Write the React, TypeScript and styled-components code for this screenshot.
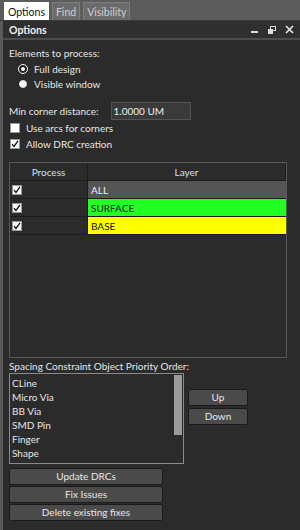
import React from "react";
import styled, { createGlobalStyle } from "styled-components";

const GlobalStyle = createGlobalStyle`
  html, body {
    margin: 0;
    padding: 0;
    background: #2b2b2b;
  }
  body {
    font-family: Lato, "Noto Sans", sans-serif;
    font-size: 10px;
    color: #e6e6e6;
  }
`;

const Frame = styled.div`
  width: 300px;
  height: 530px;
  display: flex;
  flex-direction: column;
  background: #5a5a5a;
  overflow: hidden;
`;

const TabBar = styled.div`
  height: 20px;
  display: flex;
  align-items: flex-end;
  gap: 3px;
  padding-left: 4px;
  background: #5c5c5c;
  border-bottom: 1px solid #3a3a3a;
`;

const Tab = styled.div<{ $active?: boolean }>`
  height: 18px;
  padding: 0 3px;
  display: flex;
  align-items: center;
  font-size: 10.5px;
  border: 1px solid ${(p) => (p.$active ? "#ffffff" : "#7e7e7e")};
  border-bottom: none;
  background: ${(p) => (p.$active ? "#ffffff" : "#6b6b6b")};
  color: ${(p) => (p.$active ? "#111" : "#cfcfcf")};
  box-sizing: border-box;
`;

const Panel = styled.div`
  flex: 1;
  display: flex;
  flex-direction: column;
  margin-left: 3px;
  background: #2b2b2b;
`;

const TitleBar = styled.div`
  height: 17px;
  display: flex;
  align-items: center;
  padding: 0 6px 0 6px;
  background: #2f2f2f;
  border-bottom: 2px solid #4d4d4d;
`;

const Title = styled.div`
  flex: 1;
  font-weight: 700;
  font-size: 10.5px;
  color: #f0f0f0;
`;

const TitleIcons = styled.div`
  display: flex;
  align-items: center;
  gap: 9px;
  color: #e8e8e8;
`;

const Body = styled.div`
  flex: 1;
  display: flex;
  flex-direction: column;
  padding: 5px 13px 0 6px;
`;

const Label = styled.div`
  height: 16px;
  line-height: 16px;
`;

const RadioRow = styled.label`
  height: 15px;
  display: flex;
  align-items: center;
  gap: 7px;
  padding-left: 10px;
`;

const RadioDot = styled.span<{ $checked?: boolean }>`
  width: 8px;
  height: 8px;
  border-radius: 50%;
  background: #ffffff;
  box-sizing: border-box;
  border: ${(p) => (p.$checked ? "2px solid #1a1a1a" : "1px solid #ddd")};
  outline: ${(p) => (p.$checked ? "1px solid #fff" : "none")};
`;

const FieldRow = styled.div`
  display: flex;
  align-items: center;
  gap: 12px;
  margin-top: 11px;
  height: 18px;
`;

const Input = styled.div`
  width: 80px;
  height: 18px;
  box-sizing: border-box;
  padding: 0 2px;
  line-height: 16px;
  background: #3a3a3a;
  border: 1px solid #555;
  color: #eee;
`;

const CheckRow = styled.label`
  height: 16px;
  display: flex;
  align-items: center;
  gap: 6px;
  padding-left: 1px;
`;

const Box = styled.span`
  width: 10px;
  height: 10px;
  background: #fff;
  border: 1px solid #999;
  box-sizing: border-box;
  display: flex;
  align-items: center;
  justify-content: center;
`;

const Table = styled.div`
  margin-top: 10px;
  height: 194px;
  border: 1px solid #5a5a5a;
  display: grid;
  grid-template-columns: 78px 1fr;
  grid-auto-rows: 18px;
  align-content: start;
  background: #2b2b2b;
`;

const HeadCell = styled.div`
  display: flex;
  align-items: center;
  justify-content: center;
  color: #d6e0ea;
  border-right: 1px solid #1c1c1c;
  border-bottom: 1px solid #1c1c1c;
  &:last-child {
    border-right: none;
  }
`;

const CheckCell = styled.div`
  display: flex;
  align-items: center;
  padding-left: 2px;
  border-right: 1px solid #1c1c1c;
  border-bottom: 1px solid #1c1c1c;
`;

const LayerCell = styled.div<{ $bg: string; $fg: string }>`
  display: flex;
  align-items: center;
  padding-left: 3px;
  background: ${(p) => p.$bg};
  color: ${(p) => p.$fg};
  border-bottom: 1px solid #1c1c1c;
`;

const SectionLabel = styled.div`
  height: 14px;
  line-height: 14px;
  margin-top: 1px;
`;

const ListArea = styled.div`
  display: flex;
  gap: 4px;
`;

const ListBox = styled.div`
  width: 175px;
  height: 91px;
  box-sizing: border-box;
  border: 1px solid #8a8a8a;
  display: flex;
  overflow: hidden;
  background: #2b2b2b;
`;

const ListItems = styled.div`
  flex: 1;
  padding: 2px 0 0 2px;
`;

const ListItem = styled.div`
  height: 14px;
  line-height: 14px;
`;

const ScrollTrack = styled.div`
  width: 8px;
  padding: 1px 1px 0 0;
`;

const ScrollThumb = styled.div`
  height: 60px;
  background: #9a9a9a;
`;

const SideButtons = styled.div`
  display: flex;
  flex-direction: column;
  gap: 2px;
  padding-top: 16px;
`;

const Button = styled.button<{ $w: number }>`
  width: ${(p) => p.$w}px;
  height: 17px;
  padding: 0;
  border: 1px solid #1a1a1a;
  border-radius: 2px;
  background: #4a4a4a;
  color: #e8e8e8;
  font-family: inherit;
  font-size: 10px;
  line-height: 15px;
`;

const ActionButtons = styled.div`
  display: flex;
  flex-direction: column;
  gap: 1px;
  margin-top: 4px;
`;

const Check = () => (
  <svg width="8" height="8" viewBox="0 0 8 8">
    <path d="M1 4.2 L3 6.4 L7 0.8" stroke="#111" strokeWidth="1.3" fill="none" />
  </svg>
);

const layers = [
  { name: "ALL", bg: "#555555", fg: "#f2f2f2" },
  { name: "SURFACE", bg: "#22ff22", fg: "#111" },
  { name: "BASE", bg: "#ffff00", fg: "#111" },
];

const priorities = ["CLine", "Micro Via", "BB Via", "SMD Pin", "Finger", "Shape", "Thermal tie"];

export default function App() {
  return (
    <>
      <GlobalStyle />
      <Frame>
        <TabBar>
          <Tab $active>Options</Tab>
          <Tab>Find</Tab>
          <Tab>Visibility</Tab>
        </TabBar>
        <Panel>
          <TitleBar>
            <Title>Options</Title>
            <TitleIcons>
              <svg width="8" height="8" viewBox="0 0 8 8">
                <rect x="0" y="5" width="7" height="2" fill="#ddd" />
              </svg>
              <svg width="8" height="8" viewBox="0 0 8 8">
                <rect x="2.5" y="0.5" width="5" height="4" stroke="#ddd" fill="none" />
                <rect x="0" y="3" width="5" height="5" fill="#ddd" />
              </svg>
              <svg width="9" height="9" viewBox="0 0 9 9">
                <path d="M1 1 L8 8 M8 1 L1 8" stroke="#eee" strokeWidth="1.5" />
              </svg>
            </TitleIcons>
          </TitleBar>
          <Body>
            <Label>Elements to process:</Label>
            <RadioRow>
              <RadioDot $checked />
              Full design
            </RadioRow>
            <RadioRow>
              <RadioDot />
              Visible window
            </RadioRow>
            <FieldRow>
              <span>Min corner distance:</span>
              <Input>1.0000 UM</Input>
            </FieldRow>
            <CheckRow>
              <Box />
              Use arcs for corners
            </CheckRow>
            <CheckRow>
              <Box>
                <Check />
              </Box>
              Allow DRC creation
            </CheckRow>
            <Table>
              <HeadCell>Process</HeadCell>
              <HeadCell>Layer</HeadCell>
              {layers.map((l) => (
                <React.Fragment key={l.name}>
                  <CheckCell>
                    <Box>
                      <Check />
                    </Box>
                  </CheckCell>
                  <LayerCell $bg={l.bg} $fg={l.fg}>
                    {l.name}
                  </LayerCell>
                </React.Fragment>
              ))}
            </Table>
            <SectionLabel>Spacing Constraint Object Priority Order:</SectionLabel>
            <ListArea>
              <ListBox>
                <ListItems>
                  {priorities.map((p) => (
                    <ListItem key={p}>{p}</ListItem>
                  ))}
                </ListItems>
                <ScrollTrack>
                  <ScrollThumb />
                </ScrollTrack>
              </ListBox>
              <SideButtons>
                <Button $w={60}>Up</Button>
                <Button $w={60}>Down</Button>
              </SideButtons>
            </ListArea>
            <ActionButtons>
              <Button $w={154}>Update DRCs</Button>
              <Button $w={154}>Fix Issues</Button>
              <Button $w={154}>Delete existing fixes</Button>
            </ActionButtons>
          </Body>
        </Panel>
      </Frame>
    </>
  );
}
